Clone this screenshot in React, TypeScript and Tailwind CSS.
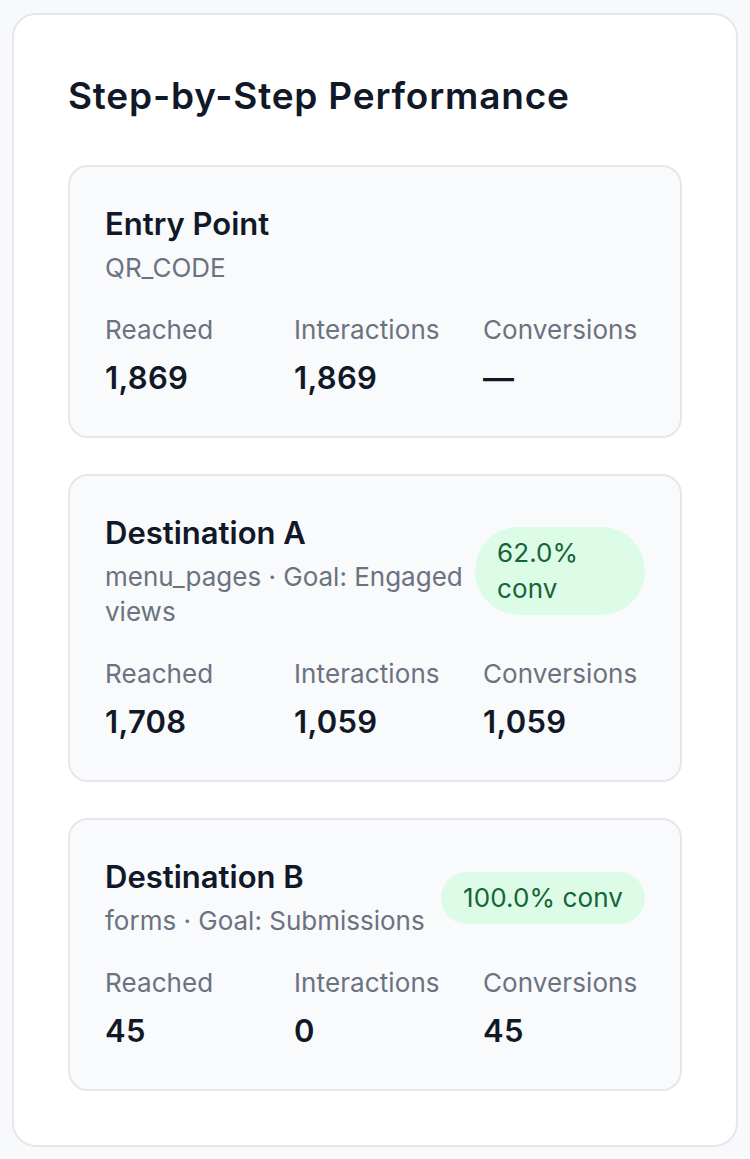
const steps = [
  {
    name: "Entry Point",
    detail: "QR_CODE",
    badge: null,
    badgeWidth: "",
    reached: "1,869",
    interactions: "1,869",
    conversions: "—",
  },
  {
    name: "Destination A",
    detail: "menu_pages · Goal: Engaged views",
    badge: "62.0% conv",
    badgeWidth: "w-[170px]",
    reached: "1,708",
    interactions: "1,059",
    conversions: "1,059",
  },
  {
    name: "Destination B",
    detail: "forms · Goal: Submissions",
    badge: "100.0% conv",
    badgeWidth: "",
    reached: "45",
    interactions: "0",
    conversions: "45",
  },
];

type Step = (typeof steps)[number];

const Metric = ({ label, value }: { label: string; value: string }) => (
  <div className="flex flex-col">
    <span className="text-[26px] leading-[34px] tracking-[0.1px] text-[#6b7280]">
      {label}
    </span>
    <span className="mt-[11px] text-[31px] leading-[40px] tracking-[0.3px] font-semibold text-[#111827]">
      {value}
    </span>
  </div>
);

const StepCard = ({ step }: { step: Step }) => (
  <div className="rounded-[20px] border-2 border-[#e5e7eb] bg-[#f8fafc] px-[35px] pt-[37px] pb-[38px]">
    <div className="flex items-center justify-between gap-[8px]">
      <div className="min-w-0">
        <p className="text-[31px] leading-[40px] font-semibold text-[#111827]">
          {step.name}
        </p>
        <p className="mt-[6px] text-[26px] leading-[35px] text-[#6b7280]">
          {step.detail}
        </p>
      </div>
      {step.badge && (
        <span
          className={`shrink-0 rounded-full bg-[#dcfce7] px-[22px] py-[8px] text-[26px] leading-[36px] tracking-[0.1px] text-[#166534] ${step.badgeWidth}`}
        >
          {step.badge}
        </span>
      )}
    </div>
    <div className="mt-[28px] grid grid-cols-3 gap-x-[27px]">
      <Metric label="Reached" value={step.reached} />
      <Metric label="Interactions" value={step.interactions} />
      <Metric label="Conversions" value={step.conversions} />
    </div>
  </div>
);

export default function App() {
  return (
    <div
      className="min-h-screen bg-[#f8f9fb] px-[12px] pt-[13px] pb-[14px]"
      style={{ fontFamily: "Inter, 'Noto Sans', sans-serif" }}
    >
      <div className="rounded-[24px] border-2 border-[#e5e7eb] bg-white px-[54px] pt-[55px] pb-[54px]">
        <h2 className="text-[37px] leading-[52px] tracking-[0.8px] font-semibold text-[#111827]">
          Step-by-Step Performance
        </h2>
        <div className="mt-[43px] flex flex-col gap-[36px]">
          {steps.map((step) => (
            <StepCard key={step.name} step={step} />
          ))}
        </div>
      </div>
    </div>
  );
}
